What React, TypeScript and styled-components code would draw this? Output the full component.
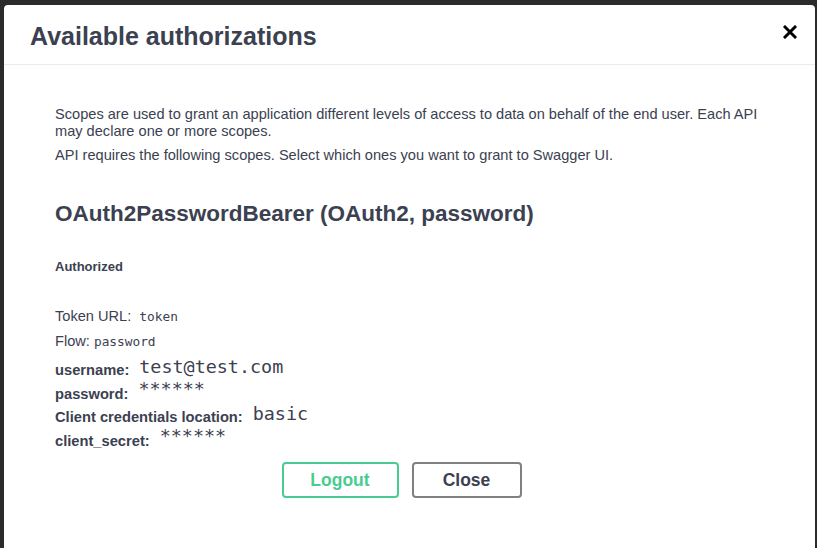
import React from "react";
import styled, { createGlobalStyle } from "styled-components";

const Global = createGlobalStyle`
  html, body { margin: 0; padding: 0; }
  body {
    background: #2b2b2b;
    font-family: "Liberation Sans", Arial, sans-serif;
    color: #3b4151;
    overflow: hidden;
  }
`;

const Backdrop = styled.div`
  height: 548px;
  padding: 5px 2px 0 4px;
  box-sizing: border-box;
  overflow: hidden;
  background: #2b2b2b;
`;

const Modal = styled.div`
  background: #fff;
  border-radius: 4px 4px 0 0;
  height: 600px;
`;

const Header = styled.div`
  display: flex;
  align-items: center;
  justify-content: space-between;
  height: 60px;
  padding: 4px 18px 0 26px;
  border-bottom: 1px solid #ebebeb;
  box-sizing: border-box;
`;

const Title = styled.h3`
  margin: 0;
  font-size: 25px;
  font-weight: 700;
  color: #3b4151;
`;

const CloseX = styled.button`
  border: 0;
  background: none;
  padding: 0;
  width: 14px;
  height: 14px;
  display: flex;
  cursor: pointer;
  margin-top: -10px;
`;

const Content = styled.div`
  padding: 41px 51px 0 51px;
`;

const Para = styled.p`
  margin: 0 0 7px 0;
  font-size: 14.6px;
  line-height: 17px;
  color: #3b4151;
`;

const SchemeTitle = styled.h4`
  margin: 36px 0 0 0;
  font-size: 22.5px;
  font-weight: 700;
  color: #3b4151;
  line-height: 28px;
`;

const Authorized = styled.h6`
  margin: 31px 0 0 0;
  font-size: 13px;
  font-weight: 700;
  line-height: 16px;
  color: #3b4151;
`;

const Info = styled.p`
  margin: 0;
  font-size: 14.6px;
  line-height: 24px;
  color: #3b4151;
`;

const InfoBlock = styled.div`
  margin-top: 29px;
`;

const Code = styled.code`
  font-family: "DejaVu Sans Mono", monospace;
  font-size: 12.8px;
  color: #3b4151;
`;

const Fields = styled.div`
  margin-top: 4px;
`;

const Field = styled.div`
  display: flex;
  align-items: baseline;
  height: 23.5px;
`;

const Label = styled.label`
  font-size: 14.7px;
  font-weight: 700;
  color: #3b4151;
  margin-right: 10px;
`;

const Value = styled.code<{ $stars?: boolean }>`
  font-family: "DejaVu Sans Mono", monospace;
  font-size: 18.4px;
  color: #3b4151;
  position: relative;
  top: ${(p) => (p.$stars ? "-4px" : "-2px")};
`;

const Actions = styled.div`
  display: flex;
  justify-content: center;
  gap: 13px;
  margin: 10px 16px 0 0;
`;

const Btn = styled.button<{ $variant: "auth" | "close" }>`
  width: ${(p) => (p.$variant === "auth" ? "117px" : "110px")};
  height: 36px;
  box-sizing: border-box;
  background: #fff;
  border-radius: 4px;
  border: 2px solid ${(p) => (p.$variant === "auth" ? "#49cc90" : "#808080")};
  color: ${(p) => (p.$variant === "auth" ? "#49cc90" : "#3b4151")};
  font-family: "Liberation Sans", Arial, sans-serif;
  font-weight: 700;
  font-size: 17.5px;
  padding: 0;
  cursor: pointer;
`;

const fields: { label: string; value: string; stars?: boolean }[] = [
  { label: "username:", value: "test@test.com" },
  { label: "password:", value: "******", stars: true },
  { label: "Client credentials location:", value: "basic" },
  { label: "client_secret:", value: "******", stars: true },
];

export default function App() {
  return (
    <>
      <Global />
      <Backdrop>
        <Modal>
          <Header>
            <Title>Available authorizations</Title>
            <CloseX aria-label="close">
              <svg width="14" height="14" viewBox="0 0 14 14">
                <path d="M2 2 L12 12 M12 2 L2 12" stroke="#000" strokeWidth="3" strokeLinecap="square" />
              </svg>
            </CloseX>
          </Header>
          <Content>
            <Para>
              Scopes are used to grant an application different levels of access to data on behalf of the end user. Each API may declare one or more scopes.
            </Para>
            <Para>API requires the following scopes. Select which ones you want to grant to Swagger UI.</Para>
            <SchemeTitle>OAuth2PasswordBearer (OAuth2, password)</SchemeTitle>
            <Authorized>Authorized</Authorized>
            <InfoBlock>
              <Info>
                Token URL:&nbsp; <Code>token</Code>
              </Info>
              <Info>
                Flow: <Code>password</Code>
              </Info>
            </InfoBlock>
            <Fields>
              {fields.map((f) => (
                <Field key={f.label}>
                  <Label>{f.label}</Label>
                  <Value $stars={f.stars}>{f.value}</Value>
                </Field>
              ))}
            </Fields>
            <Actions>
              <Btn $variant="auth">Logout</Btn>
              <Btn $variant="close">Close</Btn>
            </Actions>
          </Content>
        </Modal>
      </Backdrop>
    </>
  );
}
